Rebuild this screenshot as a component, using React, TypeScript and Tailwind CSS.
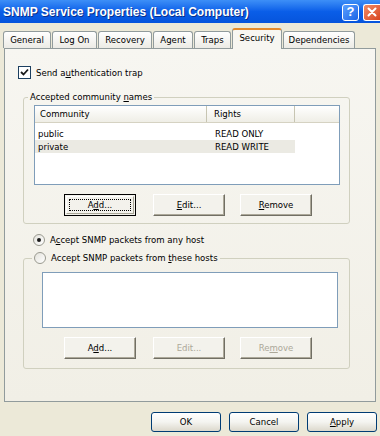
import React from 'react';

const tabs = [
  { label: 'General', w: 'w-[48px]' },
  { label: 'Log On', w: 'w-[45px]' },
  { label: 'Recovery', w: 'w-[54px]' },
  { label: 'Agent', w: 'w-[40px]' },
  { label: 'Traps', w: 'w-[37px]' },
  { label: 'Security', w: 'w-[50px]', active: true },
  { label: 'Dependencies', w: 'w-[72px]' },
];

function Btn({
  children,
  className = '',
  disabled = false,
  focused = false,
}: {
  children: React.ReactNode;
  className?: string;
  disabled?: boolean;
  focused?: boolean;
}) {
  if (focused) {
    return (
      <div className={`flex h-[22px] w-[72px] border border-black bg-[#f3f2ec] p-[1px] ${className}`}>
        <div className="flex flex-1 border border-t-white border-l-white border-r-[#a7a596] border-b-[#a7a596] p-[2px]">
          <div className="flex flex-1 items-center justify-center border border-dotted border-black">{children}</div>
        </div>
      </div>
    );
  }
  return (
    <div
      className={`flex h-[22px] w-[72px] items-center justify-center border border-t-white border-l-white border-r-[#716f64] border-b-[#716f64] bg-[#f3f2ec] shadow-[inset_-1px_-1px_0_#aca899] ${
        disabled ? 'text-[#aca899]' : ''
      } ${className}`}
    >
      {children}
    </div>
  );
}

function XpBtn({ children }: { children: React.ReactNode }) {
  return (
    <div className="flex h-[20px] w-[70px] items-center justify-center rounded-[3px] border border-[#003c74] bg-gradient-to-b from-white via-[#f4f4f0] to-[#dcd8cc]">
      {children}
    </div>
  );
}

export default function App() {
  return (
    <div className="flex h-[436px] w-[380px] flex-col overflow-hidden bg-[#ece9d8] font-['DejaVu_Sans_Condensed','Liberation_Sans',Arial,sans-serif] text-[9.5px] leading-[12px] text-black">
      {/* Title bar */}
      <div className="flex h-[23px] shrink-0 items-center justify-between bg-gradient-to-b from-[#3d8ff7] via-[#0a5ee8] to-[#0654dc] pl-[3px]">
        <span className="font-['Liberation_Sans',Arial,sans-serif] text-[12px] font-bold text-white [text-shadow:1px_1px_0_#0a2f8a]">
          SNMP Service Properties (Local Computer)
        </span>
        <div className="flex items-center gap-[4px] pt-[1px]">
          <div className="flex h-[17px] w-[17px] items-center justify-center rounded-[3px] border border-white bg-gradient-to-br from-[#5aa0ff] to-[#1a63e6] font-['Liberation_Sans',Arial,sans-serif] text-[13px] font-bold text-white">
            ?
          </div>
          <div className="flex h-[17px] w-[17px] items-center justify-center rounded-l-[3px] border border-r-0 border-white bg-gradient-to-br from-[#f08a64] to-[#d8431c]">
            <svg width="10" height="10" viewBox="0 0 10 10">
              <path d="M1.5 1.5 L8.5 8.5 M8.5 1.5 L1.5 8.5" stroke="white" strokeWidth="2" strokeLinecap="round" />
            </svg>
          </div>
        </div>
      </div>

      {/* Tabs */}
      <div className="flex h-[25px] shrink-0 items-end gap-[1px] pl-[3px]">
        {tabs.map((t) =>
          t.active ? (
            <div
              key={t.label}
              className={`relative z-10 -mb-[1px] flex h-[21px] ${t.w} items-start justify-center rounded-t-[3px] border-x border-t-2 border-x-[#919b9c] border-t-[#e68b2c] bg-[#f7f6f1] pt-[2px]`}
            >
              {t.label}
            </div>
          ) : (
            <div
              key={t.label}
              className={`flex h-[17px] ${t.w} items-center justify-center rounded-t-[3px] border-x border-t border-[#919b9c] bg-gradient-to-b from-white to-[#ecebe5]`}
            >
              {t.label}
            </div>
          )
        )}
      </div>

      {/* Panel */}
      <div className="mx-[4px] h-[354px] shrink-0 border border-[#919b9c] bg-gradient-to-b from-[#f7f6f1] to-[#f1efe6]">
        {/* checkbox */}
        <div className="ml-[13px] mt-[17px] flex h-[13px] items-center gap-[5px]">
          <div className="flex h-[13px] w-[13px] items-center justify-center border border-[#1c3f60] bg-white">
            <svg width="9" height="9" viewBox="0 0 9 9">
              <path d="M1 4 L3.5 6.5 L8 1.5" stroke="#1a1a1a" strokeWidth="1.8" fill="none" />
            </svg>
          </div>
          <span>
            Send a<u>u</u>thentication trap
          </span>
        </div>

        {/* Group 1 */}
        <fieldset className="ml-[18px] mt-[12px] w-[327px] rounded-[3px] border border-[#d0d0bf] pb-[7px]">
          <legend className="ml-[4px] px-[2px]">
            Accepted community <u>n</u>ames
          </legend>
          <div className="ml-[10px] mt-[2px] flex h-[80px] w-[306px] flex-col border border-[#7f9db9] bg-white">
            <div className="flex h-[17px] shrink-0 border-b border-[#d5d2c2] bg-gradient-to-b from-white to-[#efeee6]">
              <div className="flex w-[172px] items-center border-r border-[#c7c5b2] pl-[5px]">Community</div>
              <div className="flex w-[88px] items-center border-r border-[#c7c5b2] pl-[7px]">Rights</div>
            </div>
            <div className="pt-[4px]">
              <div className="flex h-[13px] w-[260px] items-center">
                <span className="w-[180px] pl-[3px]">public</span>
                <span>READ ONLY</span>
              </div>
              <div className="flex h-[13px] w-[260px] items-center bg-[#ebeae3]">
                <span className="w-[180px] pl-[3px]">private</span>
                <span>READ WRITE</span>
              </div>
            </div>
          </div>
          <div className="mt-[9px] flex">
            <Btn focused className="ml-[40px]">
              <span>
                A<u>d</u>d...
              </span>
            </Btn>
            <Btn className="ml-[17px]">
              <span>
                <u>E</u>dit...
              </span>
            </Btn>
            <Btn className="ml-[15px]">
              <span>
                <u>R</u>emove
              </span>
            </Btn>
          </div>
        </fieldset>

        {/* Radio 1 */}
        <div className="ml-[28px] mt-[10px] flex h-[12px] items-center gap-[5px]">
          <div className="flex h-[12px] w-[12px] items-center justify-center rounded-full border border-[#9a9a90] bg-gradient-to-br from-[#e4e3dc] to-white">
            <div className="h-[4px] w-[4px] rounded-full bg-[#1a1a1a]" />
          </div>
          <span>
            A<u>c</u>cept SNMP packets from any host
          </span>
        </div>

        {/* Group 2 */}
        <fieldset className="ml-[18px] mt-[6px] w-[327px] rounded-[3px] border border-[#d0d0bf] pb-[9px]">
          <legend className="ml-[8px] px-[2px]">
            <span className="flex items-center gap-[5px]">
              <span className="h-[12px] w-[12px] rounded-full border border-[#9a9a90] bg-gradient-to-br from-[#e4e3dc] to-white" />
              <span>
                Accept SNMP packets from <u>t</u>hese hosts
              </span>
            </span>
          </legend>
          <div className="ml-[18px] mt-[8px] h-[56px] w-[296px] border border-[#7f9db9] bg-white" />
          <div className="mt-[9px] flex">
            <Btn className="ml-[40px]">
              <span>
                A<u>d</u>d...
              </span>
            </Btn>
            <Btn disabled className="ml-[17px]">
              <span>Edit...</span>
            </Btn>
            <Btn disabled className="ml-[15px]">
              <span>
                Re<u>m</u>ove
              </span>
            </Btn>
          </div>
        </fieldset>
      </div>

      {/* Dialog buttons */}
      <div className="mt-[10px] flex justify-end gap-[8px] pr-[3px]">
        <XpBtn>OK</XpBtn>
        <XpBtn>Cancel</XpBtn>
        <XpBtn>
          <span>
            <u>A</u>pply
          </span>
        </XpBtn>
      </div>
    </div>
  );
}
